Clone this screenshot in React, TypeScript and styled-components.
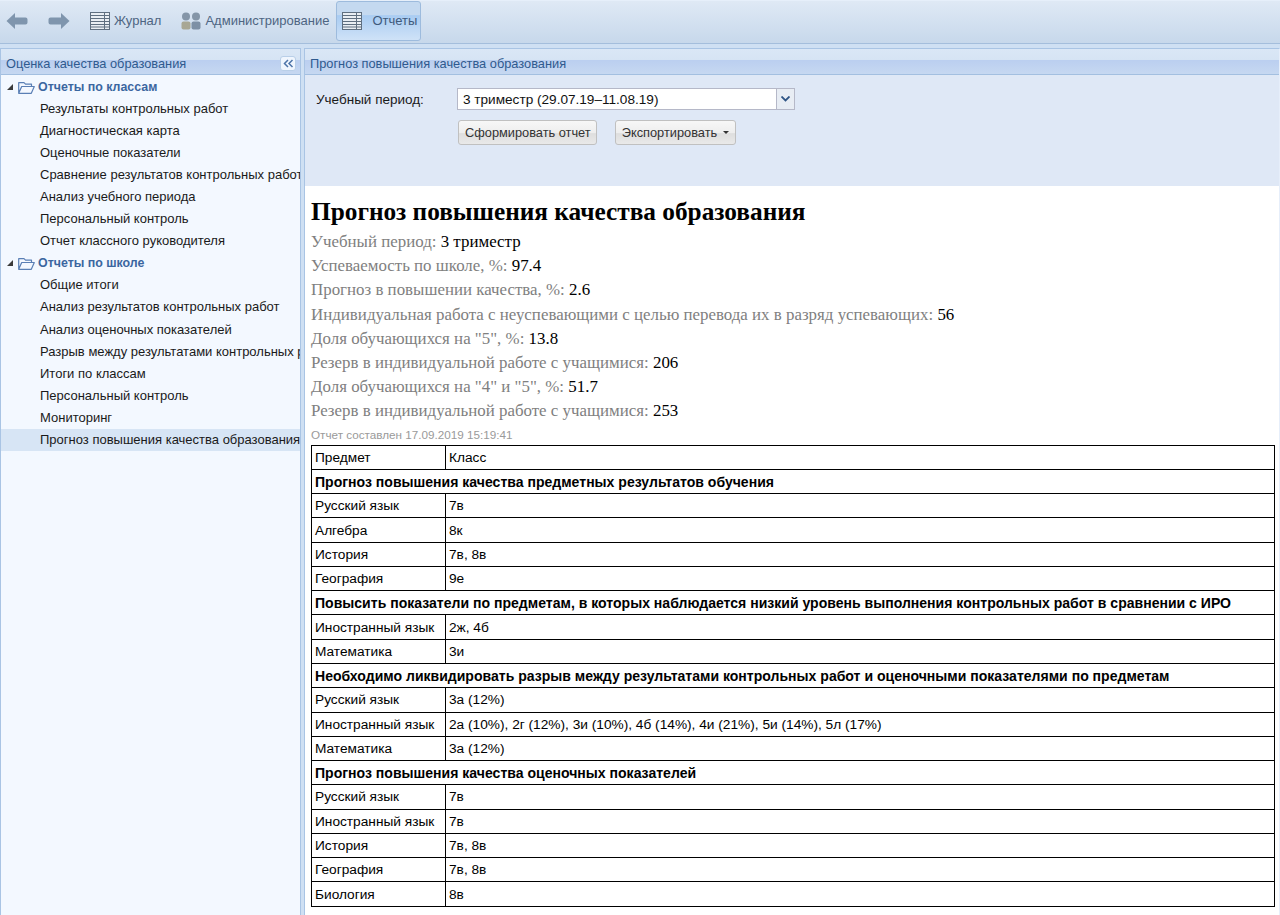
import React from 'react';
import styled, { createGlobalStyle } from 'styled-components';

const GlobalStyle = createGlobalStyle`
    html, body {
        margin: 0;
        padding: 0;
        height: 100%;
        overflow: hidden;
        font-family: "Liberation Sans", Arial, sans-serif;
        background: #dfe8f6;
    }
`;

const treeGroups = [
    {
        title: 'Отчеты по классам',
        items: [
            'Результаты контрольных работ',
            'Диагностическая карта',
            'Оценочные показатели',
            'Сравнение результатов контрольных работ',
            'Анализ учебного периода',
            'Персональный контроль',
            'Отчет классного руководителя',
        ],
    },
    {
        title: 'Отчеты по школе',
        items: [
            'Общие итоги',
            'Анализ результатов контрольных работ',
            'Анализ оценочных показателей',
            'Разрыв между результатами контрольных работ',
            'Итоги по классам',
            'Персональный контроль',
            'Мониторинг',
            'Прогноз повышения качества образования',
        ],
    },
];

const summary = [
    ['Учебный период', '3 триместр'],
    ['Успеваемость по школе, %', '97.4'],
    ['Прогноз в повышении качества, %', '2.6'],
    ['Индивидуальная работа с неуспевающими с целью перевода их в разряд успевающих', '56'],
    ['Доля обучающихся на "5", %', '13.8'],
    ['Резерв в индивидуальной работе с учащимися', '206'],
    ['Доля обучающихся на "4" и "5", %', '51.7'],
    ['Резерв в индивидуальной работе с учащимися', '253'],
];

const rows: (string | [string, string])[] = [
    ['Предмет', 'Класс'],
    'Прогноз повышения качества предметных результатов обучения',
    ['Русский язык', '7в'],
    ['Алгебра', '8к'],
    ['История', '7в, 8в'],
    ['География', '9е'],
    'Повысить показатели по предметам, в которых наблюдается низкий уровень выполнения контрольных работ в сравнении с ИРО',
    ['Иностранный язык', '2ж, 4б'],
    ['Математика', '3и'],
    'Необходимо ликвидировать разрыв между результатами контрольных работ и оценочными показателями по предметам',
    ['Русский язык', '3а (12%)'],
    ['Иностранный язык', '2а (10%), 2г (12%), 3и (10%), 4б (14%), 4и (21%), 5и (14%), 5л (17%)'],
    ['Математика', '3а (12%)'],
    'Прогноз повышения качества оценочных показателей',
    ['Русский язык', '7в'],
    ['Иностранный язык', '7в'],
    ['История', '7в, 8в'],
    ['География', '7в, 8в'],
    ['Биология', '8в'],
];

const ArrowIcon = ({ flip }: { flip?: boolean }) => (
    <svg width="22" height="18" viewBox="0 0 22 18" style={{ transform: flip ? 'scaleX(-1)' : undefined }}>
        <path d="M0.5 9 L9 1 V5.5 H19.5 Q21.5 5.5 21.5 7.5 V10.5 Q21.5 12.5 19.5 12.5 H9 V17 Z" fill="#7f95ad" />
    </svg>
);

const GridIcon = () => (
    <svg width="20" height="18" viewBox="0 0 20 18">
        <rect x="0.5" y="0.5" width="19" height="17" fill="#e9eef3" stroke="#5f6f80" />
        <path d="M1 3.5H19M1 6.5H19M1 9.5H19M1 12.5H19M1 15H19" stroke="#5f6f80" />
        <path d="M14.5 1V17" stroke="#5f6f80" />
    </svg>
);

const UsersIcon = () => (
    <svg width="20" height="18" viewBox="0 0 20 18">
        <circle cx="5" cy="4.5" r="4" fill="#8596a8" />
        <circle cx="15" cy="4.5" r="4" fill="#8596a8" />
        <rect x="0.5" y="9.5" width="9" height="8" rx="2" fill="#a8a794" />
        <rect x="10.5" y="9.5" width="9" height="8" rx="2" fill="#7d90a5" />
    </svg>
);

const FolderIcon = () => (
    <svg width="17" height="13" viewBox="0 0 17 13">
        <path
            d="M0.7 12.3V1.7H6L7.5 3.2H13.5V5.5M0.7 12.3L3.7 5.5H16.3L13.3 12.3Z"
            fill="#f4f8ff"
            stroke="#5a7fb5"
            strokeWidth="1.2"
            strokeLinejoin="round"
        />
    </svg>
);

const App = (): JSX.Element => {
    return (
        <>
            <GlobalStyle />
            <Page>
                <Toolbar>
                    <NavButton><ArrowIcon /></NavButton>
                    <NavButton><ArrowIcon flip /></NavButton>
                    <ToolButton $trail={20}><GridIcon />Журнал</ToolButton>
                    <ToolButton $trail={7}><UsersIcon />Администрирование</ToolButton>
                    <ActiveToolButton><GridIcon /><span>Отчеты</span></ActiveToolButton>
                </Toolbar>

                <Workspace>
                    <Sidebar>
                        <PanelHeader>
                            Оценка качества образования
                            <CollapseButton>
                                <svg width="11" height="9" viewBox="0 0 11 9">
                                    <path d="M5 1 L1.5 4.5 L5 8 M9.5 1 L6 4.5 L9.5 8" fill="none" stroke="#4d74a8" strokeWidth="1.5" />
                                </svg>
                            </CollapseButton>
                        </PanelHeader>
                        <Tree>
                            {treeGroups.map((group) => (
                                <React.Fragment key={group.title}>
                                    <TreeGroup>
                                        <Expander />
                                        <FolderIcon />
                                        <span>{group.title}</span>
                                    </TreeGroup>
                                    {group.items.map((item) => (
                                        <TreeItem key={item} $selected={item.startsWith('Прогноз')}>{item}</TreeItem>
                                    ))}
                                </React.Fragment>
                            ))}
                        </Tree>
                    </Sidebar>

                    <Main>
                        <PanelHeader>Прогноз повышения качества образования</PanelHeader>
                        <FilterForm>
                            <FilterRow>
                                <FilterLabel>Учебный период:</FilterLabel>
                                <Combo>
                                    <ComboValue>3 триместр (29.07.19–11.08.19)</ComboValue>
                                    <ComboTrigger>
                                        <svg width="9" height="6" viewBox="0 0 9 6">
                                            <path d="M0.5 0.5 L4.5 4.5 L8.5 0.5" fill="none" stroke="#2f5585" strokeWidth="1.8" />
                                        </svg>
                                    </ComboTrigger>
                                </Combo>
                            </FilterRow>
                            <FormButtons>
                                <FormButton>Сформировать отчет</FormButton>
                                <FormButton>Экспортировать<Caret /></FormButton>
                            </FormButtons>
                        </FilterForm>

                        <Report>
                            <ReportTitle>Прогноз повышения качества образования</ReportTitle>
                            {summary.map(([label, value], i) => (
                                <SummaryLine key={i}><span>{label}: </span>{value}</SummaryLine>
                            ))}
                            <Stamp>Отчет составлен 17.09.2019 15:19:41</Stamp>
                            <ReportTable>
                                <tbody>
                                    {rows.map((row, i) => (
                                        typeof row === 'string' ? (
                                            <tr key={i}><SectionCell colSpan={2}>{row}</SectionCell></tr>
                                        ) : (
                                            <tr key={i}>
                                                <SubjectCell>{row[0]}</SubjectCell>
                                                <Cell>{row[1]}</Cell>
                                            </tr>
                                        )
                                    ))}
                                </tbody>
                            </ReportTable>
                        </Report>
                    </Main>
                </Workspace>
            </Page>
        </>
    );
};

const Page = styled.div`
    width: 1280px;
    height: 915px;
    display: flex;
    flex-direction: column;
    overflow: hidden;
`;

const Toolbar = styled.div`
    height: 44px;
    box-sizing: border-box;
    flex: none;
    display: flex;
    align-items: center;
    padding: 0 0 3px 6px;
    background: linear-gradient(#dfe9f5, #c7d8eb);
    border-top: 1px solid #e6effa;
    border-bottom: 1px solid #a4bedc;
`;

const NavButton = styled.div`
    width: 42px;
    display: flex;
    align-items: center;
`;

const ToolButton = styled.div<{ $trail: number }>`
    display: flex;
    align-items: center;
    gap: 4px;
    margin-right: ${(p) => p.$trail}px;
    height: 38px;
    font-size: 13px;
    color: #4e6582;
`;

const ActiveToolButton = styled.div`
    display: flex;
    align-items: center;
    gap: 10px;
    width: 85px;
    height: 40px;
    box-sizing: border-box;
    padding-left: 5px;
    font-size: 13px;
    color: #3f5a7c;
    border: 1px solid #9dbbdd;
    border-radius: 3px;
    background: linear-gradient(#c4d9f0 0, #c4d9f0 33%, #a9ccf2 36%, #cfe2f7 100%);
`;

const Workspace = styled.div`
    flex: 1;
    min-height: 0;
    display: flex;
    gap: 3px;
    padding-top: 4px;
    background: #cfe0f3;
`;

const Sidebar = styled.aside`
    width: 301px;
    flex: none;
    box-sizing: border-box;
    display: flex;
    flex-direction: column;
    background: #f3f8ff;
    border: 1px solid #a9c4e4;
    border-bottom: none;
    overflow: hidden;
`;

const PanelHeader = styled.div`
    position: relative;
    flex: none;
    height: 26px;
    box-sizing: border-box;
    padding: 7px 0 0 5px;
    font-size: 12.8px;
    line-height: 15px;
    color: #2f5a8f;
    white-space: nowrap;
    background: linear-gradient(#dae7f6 0, #d6e4f4 44%, #bbcff0 46%, #c6d8f1 100%);
    border-bottom: 1px solid #a3bfe0;
`;

const CollapseButton = styled.div`
    position: absolute;
    top: 7px;
    right: 4px;
    width: 16px;
    height: 15px;
    box-sizing: border-box;
    display: flex;
    align-items: center;
    justify-content: center;
    background: #f0f6fe;
    border: 1px solid #b9cfe8;
    border-radius: 3px;
`;

const Tree = styled.div`
    display: flex;
    flex-direction: column;
    padding-top: 1px;
`;

const TreeGroup = styled.div`
    display: flex;
    align-items: center;
    height: 22.05px;
    padding-left: 6px;
    font-size: 12.4px;
    font-weight: bold;
    color: #3b66a0;
    span {
        margin-left: 3px;
    }
`;

const Expander = styled.div`
    width: 0;
    height: 0;
    margin-right: 5px;
    border-left: 6px solid transparent;
    border-bottom: 6px solid #3a3a3a;
`;

const TreeItem = styled.div<{ $selected?: boolean }>`
    height: 22.05px;
    line-height: 21px;
    padding-left: 39px;
    font-size: 13px;
    color: #1a1a1a;
    white-space: nowrap;
    overflow: hidden;
    background: ${(p) => (p.$selected ? '#d7e5f5' : 'transparent')};
`;

const Main = styled.main`
    flex: 1;
    min-width: 0;
    display: flex;
    flex-direction: column;
    background: #fff;
    border-top: 1px solid #a9c4e4;
    border-left: 1px solid #a9c4e4;
    border-right: 1px solid #e6eefa;
`;

const FilterForm = styled.div`
    flex: none;
    height: 111px;
    box-sizing: border-box;
    padding: 13px 0 0 11px;
    background: #dfe8f6;
`;

const FilterRow = styled.div`
    display: flex;
    align-items: center;
`;

const FilterLabel = styled.div`
    width: 141px;
    font-size: 13.5px;
    color: #1a1a1a;
`;

const Combo = styled.div`
    display: flex;
    width: 338px;
    height: 22px;
    box-sizing: border-box;
    background: #fff;
    border: 1px solid #b5b8c8;
`;

const ComboValue = styled.div`
    flex: 1;
    padding-left: 5px;
    font-size: 13.6px;
    line-height: 21px;
    color: #111;
`;

const ComboTrigger = styled.div`
    width: 17px;
    display: flex;
    align-items: center;
    justify-content: center;
    background: #e8edf4;
    border-left: 1px solid #b5b8c8;
`;

const FormButtons = styled.div`
    display: flex;
    gap: 18px;
    margin: 10px 0 0 142px;
`;

const FormButton = styled.div`
    height: 25px;
    box-sizing: border-box;
    padding: 0 5px 0 6px;
    display: flex;
    align-items: center;
    font-size: 12.8px;
    color: #333;
    border: 1px solid #c0c0c0;
    border-radius: 3px;
    background: linear-gradient(#f7f7f7 0, #eee 50%, #dedede 55%, #e9e9e9 100%);
`;

const Caret = styled.span`
    width: 0;
    height: 0;
    margin: 0 1px 0 6px;
    border-left: 3px solid transparent;
    border-right: 3px solid transparent;
    border-top: 3px solid #333;
`;

const Report = styled.div`
    flex: 1;
    min-height: 0;
    padding: 0 4px 0 6px;
    background: #fff;
    font-family: "Liberation Serif", "Times New Roman", serif;
    color: #000;
`;

const ReportTitle = styled.h1`
    margin: 11px 0 5px;
    font-size: 25.3px;
    line-height: 28px;
    font-weight: bold;
`;

const SummaryLine = styled.div`
    font-size: 16.9px;
    line-height: 24.2px;
    span {
        color: #808080;
    }
`;

const Stamp = styled.div`
    margin-top: 3px;
    font-family: "Liberation Sans", Arial, sans-serif;
    font-size: 11.7px;
    line-height: 15px;
    color: #9a9a9a;
`;

const ReportTable = styled.table`
    width: 964px;
    margin-top: 3px;
    border-collapse: collapse;
    table-layout: fixed;
    font-family: "Liberation Sans", Arial, sans-serif;
    font-size: 13.7px;
    color: #000;
`;

const Cell = styled.td`
    height: 24.28px;
    box-sizing: border-box;
    padding: 0 3px;
    border: 1px solid #000;
    white-space: nowrap;
`;

const SubjectCell = styled(Cell)`
    width: 134px;
`;

const SectionCell = styled(Cell)`
    font-size: 14.05px;
    font-weight: bold;
`;

export default App;
